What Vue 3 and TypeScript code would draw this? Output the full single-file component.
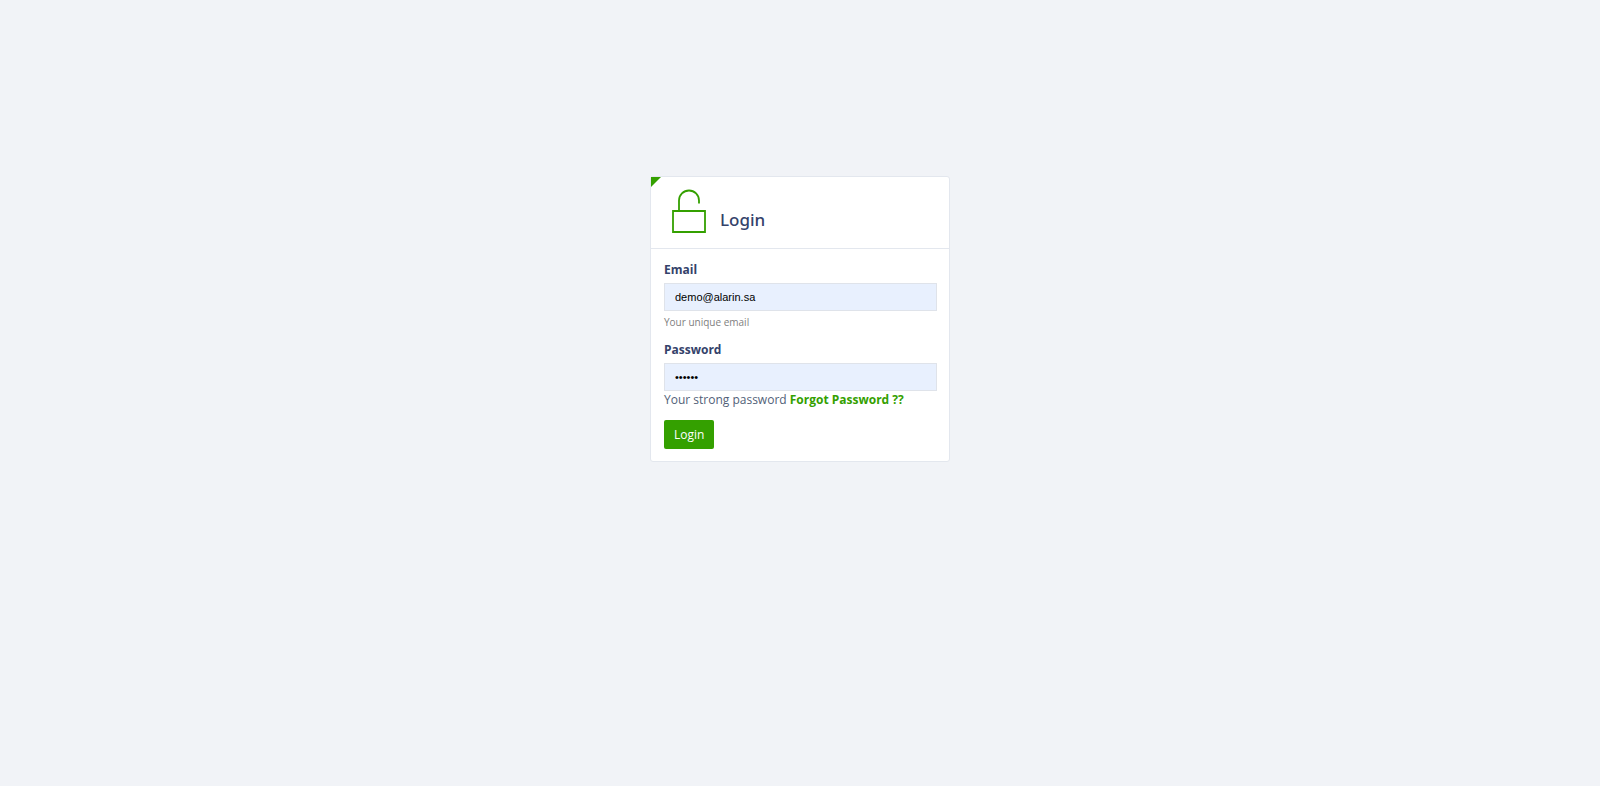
<script setup lang="ts">
import { ref } from 'vue'

const email = ref('demo@alarin.sa')
const password = ref('secret')
</script>

<template>
  <main class="page">
    <section class="card">
      <header class="head">
        <span class="corner"></span>
        <svg class="lock" viewBox="0 0 34 44" aria-hidden="true">
          <path d="M1 22H33V43H1ZM7 22V11.500A10 10 0 0 1 27 11.500V14.500" />
        </svg>
        <h1 class="title">Login</h1>
      </header>
      <form class="body" @submit.prevent>
        <div class="group">
          <label class="label" for="email">Email</label>
          <input id="email" v-model="email" class="input" type="email" />
          <small class="hint">Your unique email</small>
        </div>
        <div class="group">
          <label class="label" for="password">Password</label>
          <input id="password" v-model="password" class="input" type="password" />
          <p class="note">Your strong password <a class="link" href="#">Forgot Password ??</a></p>
        </div>
        <button class="submit" type="submit">Login</button>
      </form>
    </section>
  </main>
</template>

<style>
body {
  margin: 0;
  background: #f1f3f7;
}
</style>

<style scoped>
.page {
  box-sizing: border-box;
  min-height: 100vh;
  padding: 176px 16px 16px;
  background: #f1f3f7;
  color: #525f78;
  font-family: "Open Sans", sans-serif;
  font-size: 12px;
  line-height: 18px;
}
.card {
  box-sizing: border-box;
  position: relative;
  max-width: 300px;
  margin: 0 auto;
  background: #fff;
  border: 1px solid #e3e7ee;
  border-radius: 3px;
}
.corner {
  position: absolute;
  top: 0;
  left: 0;
  border-top: 10px solid #34a000;
  border-right: 10px solid transparent;
}
.head {
  display: flex;
  align-items: flex-end;
  gap: 14px;
  padding: 12px 20px 15px 21px;
  border-bottom: 1px solid #e3e7ee;
}
.lock {
  width: 34px;
  height: 44px;
  fill: none;
  stroke: #34a000;
  stroke-width: 1.8;
}
.title {
  margin: 0;
  color: #34426a;
  font-family: "Noto Sans", "Open Sans", sans-serif;
  font-size: 17px;
  font-weight: 500;
  line-height: 26px;
}
.body {
  padding: 12px 12px 12px 13px;
}
.group {
  margin-bottom: 11px;
}
.label {
  display: block;
  margin-bottom: 4px;
  color: #34426a;
  font-weight: 700;
}
.input {
  display: block;
  box-sizing: border-box;
  width: 100%;
  height: 28px;
  padding: 0 10px;
  border: 1px solid #dfe3ea;
  border-radius: 0;
  background: #e8f0fe;
  color: #000;
  font-family: "Liberation Sans", Arial, sans-serif;
  font-size: 11px;
  outline: none;
}
.hint {
  display: block;
  margin-top: 3px;
  color: #808080;
  font-size: 10px;
  line-height: 16px;
}
.note {
  margin: 0;
}
.link {
  color: #34a000;
  font-weight: 700;
  text-decoration: none;
}
.submit {
  display: block;
  height: 29px;
  padding: 0 10px;
  border: 0;
  border-radius: 2px;
  background: #34a000;
  color: #fff;
  font-family: inherit;
  font-size: 12px;
}
</style>
